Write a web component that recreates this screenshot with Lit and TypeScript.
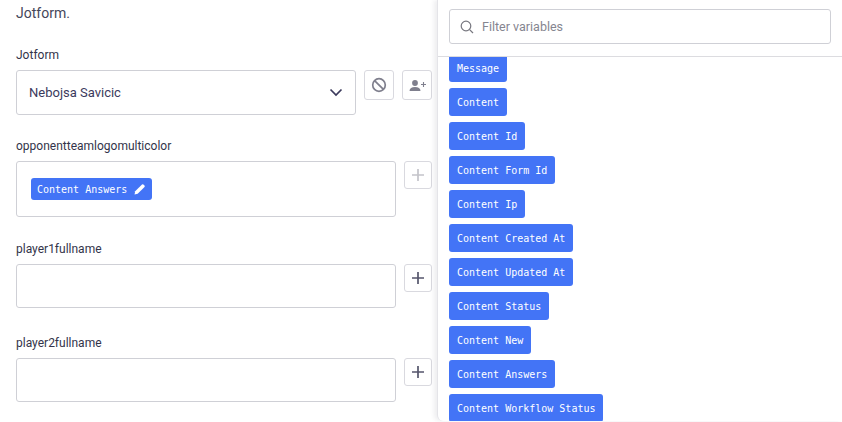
import { LitElement, html, css, svg } from "lit";
import { customElement } from "lit/decorators.js";

const chips = ["Message","Content","Content Id","Content Form Id","Content Ip","Content Created At","Content Updated At","Content Status","Content New","Content Answers","Content Workflow Status"];

const plus = svg`<svg width="14" height="14" viewBox="0 0 14 14"><path d="M7 1v12M1 7h12" stroke="currentColor" stroke-width="1.7" fill="none"/></svg>`;

@customElement("app-root")
export class AppRoot extends LitElement {
  static styles = css`
    :host { display: block; width: 842px; height: 422px; overflow: hidden; background: #fff; font-family: Roboto, "Noto Sans", sans-serif; color: #3b3a52; }
    .page { display: grid; grid-template-columns: 437px 405px; height: 422px; overflow: hidden; }
    .left { padding: 4px 0 0 16px; display: flex; flex-direction: column; }
    .intro { font-size: 14px; line-height: 19px; height: 19px; color: #45465a; margin-bottom: 23px; }
    label { display: block; font-size: 12px; line-height: 18px; height: 16px; color: #33344a; margin-bottom: 8px; }
    .row { display: flex; gap: 8px; align-items: flex-start; }
    .field { margin-bottom: 26px; }
    .field.first { margin-bottom: 22px; }
    .field.second { margin-bottom: 23px; }
    .box { box-sizing: border-box; width: 380px; height: 44px; border: 1px solid #cfd0d6; border-radius: 3px; background: #fff; }
    .box.tall { height: 56px; padding: 16px 14px; display: flex; align-items: flex-start; }
    .select { box-sizing: border-box; width: 340px; height: 45px; border: 1px solid #cfd0d6; border-radius: 3px; display: flex; align-items: center; justify-content: space-between; padding: 0 12px; font-size: 13px; color: #3b3a5c; }
    .btn { box-sizing: border-box; width: 28px; height: 28px; border: 1px solid #d9d9df; border-radius: 3px; display: flex; align-items: center; justify-content: center; color: #55566c; background: #fff; flex: none; }
    .btn.wide { width: 30px; height: 30px; color: #7f7f8d; }
    .btn.off { color: #c4c4ca; }
    .actions { display: flex; gap: 8px; }
    .chip { box-sizing: border-box; display: inline-flex; flex: none; align-items: center; gap: 7px; font-family: "DejaVu Sans Mono", monospace; font-weight: 400; font-size: 10px; color: #fff; background: #4374f6; border-radius: 3px; height: 28px; padding: 0 8px; white-space: nowrap; width: fit-content; }
    .chip.small { height: 22px; padding: 0 6px; gap: 7px; }
    .drawer { border-left: 1px solid #e4e4e8; box-shadow: -3px 0 4px rgba(40,40,60,0.08); border-bottom-left-radius: 6px; background: #fff; display: flex; flex-direction: column; height: 421px; overflow: hidden; }
    .head { flex: none; box-sizing: border-box; height: 57px; padding: 9px 11px 0 11px; border-bottom: 1px solid #dcdce0; position: relative; z-index: 1; background: #fff; }
    .search { box-sizing: border-box; height: 35px; border: 1px solid #cfd0d6; border-radius: 3px; display: flex; align-items: center; gap: 8px; padding: 0 10px; font-size: 12.5px; color: #85858f; }
    .list { flex: 1; overflow: hidden; padding: 0 11px; display: flex; flex-direction: column; gap: 6px; margin-top: -3px; }
  `;

  render() {
    return html`<div class="page">
      <div class="left">
        <div class="intro">Jotform.</div>
        <div class="field first">
          <label>Jotform</label>
          <div class="row">
            <div class="select"><span>Nebojsa Savicic</span>
              <svg width="14" height="9" viewBox="0 0 14 9"><path d="M1.5 1.5 7 7l5.5-5.5" stroke="#3b3a5c" stroke-width="1.7" fill="none"/></svg>
            </div>
            <div class="actions">
              <div class="btn wide"><svg width="16" height="16" viewBox="0 0 16 16"><circle cx="8" cy="8" r="6.3" stroke="currentColor" stroke-width="1.7" fill="none"/><path d="M3.6 3.6l8.8 8.8" stroke="currentColor" stroke-width="1.7"/></svg></div>
              <div class="btn wide"><svg width="18" height="14" viewBox="0 0 18 14"><circle cx="7" cy="5" r="2.9" fill="currentColor"/><path d="M1.5 13c0-2.6 2.2-4 5.5-4s5.5 1.4 5.5 4z" fill="currentColor"/><path d="M15.5 4v5M13 6.5h5" stroke="currentColor" stroke-width="1.1"/></svg></div>
            </div>
          </div>
        </div>
        <div class="field second">
          <label>opponentteamlogomulticolor</label>
          <div class="row">
            <div class="box tall"><span class="chip small">Content Answers
              <svg width="12" height="12" viewBox="0 0 12 12"><path d="M.5 11.5l.7-3.2L8 1.5a1 1 0 0 1 1.4 0l1.1 1.1a1 1 0 0 1 0 1.4L3.7 10.8z" fill="#fff"/></svg></span></div>
            <div class="btn off">${plus}</div>
          </div>
        </div>
        <div class="field">
          <label>player1fullname</label>
          <div class="row"><div class="box"></div><div class="btn">${plus}</div></div>
        </div>
        <div class="field">
          <label>player2fullname</label>
          <div class="row"><div class="box"></div><div class="btn">${plus}</div></div>
        </div>
      </div>
      <div class="drawer">
        <div class="head">
          <div class="search">
            <svg width="14" height="14" viewBox="0 0 14 14"><circle cx="6" cy="6" r="4.8" stroke="#77777f" stroke-width="1.2" fill="none"/><path d="M9.6 9.6 13 13" stroke="#77777f" stroke-width="1.2"/></svg>
            <span>Filter variables</span>
          </div>
        </div>
        <div class="list">${chips.map((c) => html`<div class="chip">${c}</div>`)}</div>
      </div>
    </div>`;
  }
}
